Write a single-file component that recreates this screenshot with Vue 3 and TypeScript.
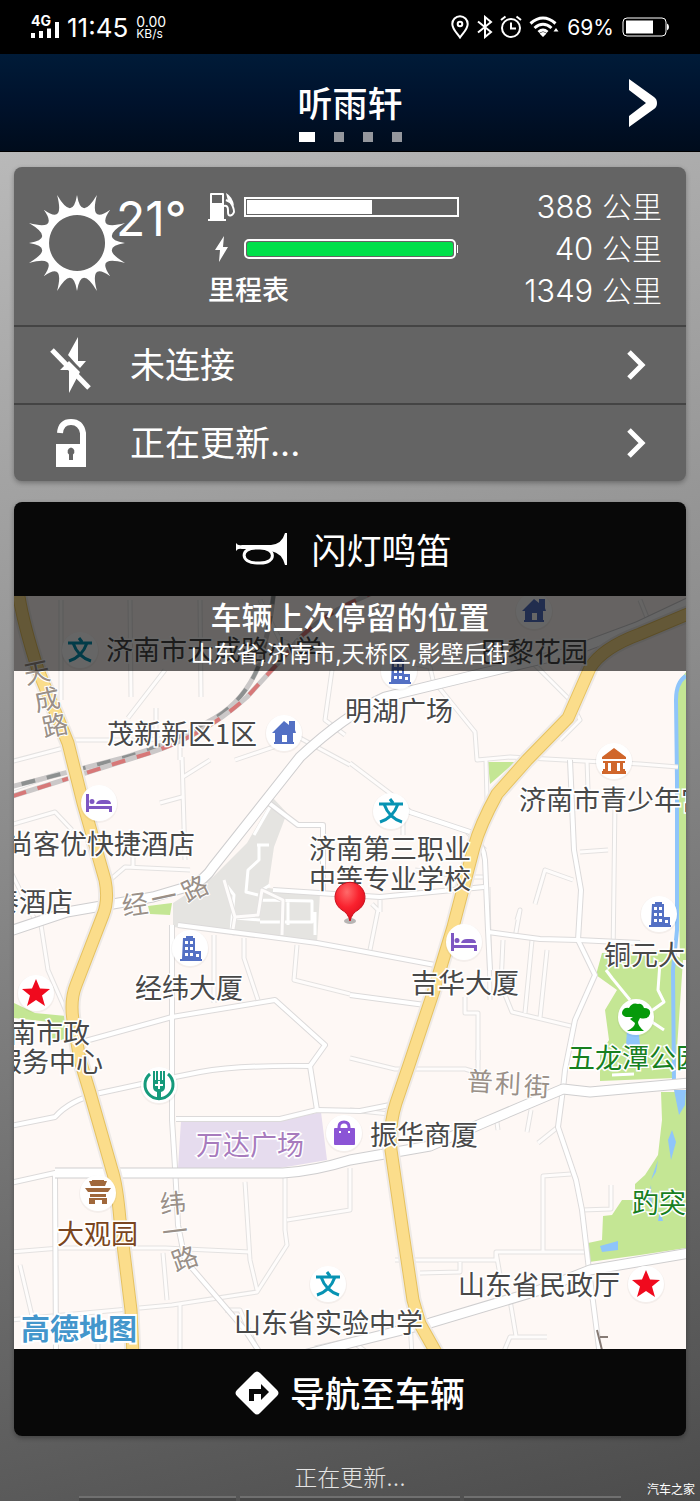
<script setup lang="ts">
interface Reading { value: string }
interface Label { text: string; x: number; y: number; tone?: string }
interface RoadChar { text: string; x: number; y: number; turn: number }
interface Pin { kind: string; x: number; y: number }

const fuelLevel = 60
const batteryLevel = 100
const readings: Reading[] = [{ value: '388' }, { value: '40' }, { value: '1349' }]

const pages = [0, 1, 2, 3]
const activePage = 0

function sunPath(): string {
  const reach = [48, 52, 47, 52]
  const point = (radius: number, step: number) => {
    const a = (step * Math.PI) / 16
    return `${(49 + radius * Math.sin(a)).toFixed(1)} ${(49 - radius * Math.cos(a)).toFixed(1)}`
  }
  let d = `M${point(48, 0)}`
  for (let i = 0; i < 16; i++) {
    d += `Q${point(22, i * 2 + 1)} ${point(reach[(i + 1) % 4], i * 2 + 2)}`
  }
  return d + 'ZM49 21a28 28 0 1 0 .1 0Z'
}
const sun = sunPath()

const whiteRoads = [
  'M690 602L637 627L567 653L467 677L385 697Q345 715 300 757L213 867Q205 880 190 886L153 897L67 912L10 931',
  'M55 1173H283Q315 1171 350 1160L430 1146L483 1123L563 1089L590 1092L690 1083',
  'M690 1253L590 1270L537 1291L430 1323L350 1343L300 1356',
]
const midRoads = [
  'M172 925V1120Q176 1180 178 1225L185 1260L245 1330L262 1356',
  'M10 1126L55 1117Q70 1100 100 1093L160 1080L200 1072Q240 1065 310 1066L325 1045L275 1000L172 1017L78 1043',
  'M176 1119L280 1119L317 1110L360 1111L390 1105',
  'M310 1066L317 1110',
  'M563 1089L565 1070L575 1020L595 975L578 940L581 890L574 850L570 760',
  'M563 1089L558 1127L576 1180L582 1210L589 1270L600 1356',
  'M10 1183L55 1173L56 1356',
  'M178 925L317 943L350 949L435 965',
  'M265 800L298 825H323V895',
  'M273 890L380 897L484 887',
  'M400 805L410 812L470 832Q484 845 485 860L488 930L490 970',
  'M488 932L540 939L578 940L640 943',
  'M350 995L425 1005',
]
const lanes = [
  'M61 600V700M130 600L131 697M200 600L201 697M165 670L128 718M70 740H140L180 738V760',
  'M10 762L75 745M156 708V735M260 600L280 640L330 660M332 670L325 720L345 735',
  'M395 660L430 667L433 680L475 732L477 760L510 757L565 760L640 764L678 767',
  'M182 757L185 860M183 777L210 760M160 803L182 797M10 825L55 812L72 830',
  'M110 880L125 867L190 870M133 855V868M10 870L35 920M41 925L48 970L72 1025',
  'M214 935V1003M244 938V958L258 1000M297 945L294 980L350 994',
  'M282 935L283 900L262 890L258 915L235 917L224 880M235 917L232 935',
  'M350 763L395 797M403 801V835M350 765L300 738L235 760M372 904L378 910L370 950M380 900V912',
  'M415 870L465 877H485M488 887L490 1000M485 850L467 832M465 997V1013H478V1060',
  'M517 920L520 910L515 938M503 940L501 985L512 1012L575 1027M532 940L525 1013M547 950L540 1018',
  'M535 904L545 870L573 880M580 852L608 850M587 760L588 790M615 800L613 960',
  'M350 1110L390 1114M350 1058L395 1069H465L475 1072M478 1050V1072M496 1115L498 1130M531 1110L527 1132M558 1127L538 1143',
  'M582 1210L611 1209V1185M543 1252V1176L571 1174M395 1260L496 1260V1252H589M420 1273L460 1272V1262M496 1252L500 1275',
  'M245 1182L250 1260L257 1290M285 1177V1230L287 1245L257 1292L172 1305L10 1320M287 1220L350 1210V1168',
  'M10 1252L60 1248H165L250 1252M163 1253L167 1300M20 1265L33 1320M225 1310H240L260 1356M180 1305V1356M98 1320V1356',
  'M510 1300L516 1336M502 1356L510 1337H547M410 1320L412 1356M350 1340L372 1356M315 1348L360 1338',
  'M10 790L60 773M640 600L650 625M520 650L570 700L580 720L560 740M486 760L487 800',
]
const yellowRoads = [
  'M18 590Q22 620 38 670L68 743L83 803L105 880Q109 900 103 915L76 985Q70 1000 73 1020L80 1060L90 1093L112 1170Q117 1185 120 1220L131 1310L133 1356',
  'M690 613L640 634Q602 648 590 668L568 718L527 760L497 794Q480 825 474 847L453 927L433 993L410 1062L396 1103Q389 1125 391 1150L403 1233L413 1300L420 1324L438 1356',
]

const labels: Label[] = [
  { text: '济南市天成路小学', x: 106, y: 650 },
  { text: '巴黎花园', x: 480, y: 652 },
  { text: '明湖广场', x: 345, y: 711 },
  { text: '茂新新区1区', x: 107, y: 734 },
  { text: '济南市青少年宫', x: 519, y: 800 },
  { text: '尚客优快捷酒店', x: 6, y: 844 },
  { text: '泰酒店', x: -8, y: 902 },
  { text: '济南第三职业', x: 309, y: 849 },
  { text: '中等专业学校', x: 309, y: 879 },
  { text: '经纬大厦', x: 135, y: 988 },
  { text: '吉华大厦', x: 411, y: 983 },
  { text: '铜元大', x: 604, y: 955 },
  { text: '南市政', x: 9, y: 1033 },
  { text: '服务中心', x: -5, y: 1062 },
  { text: '五龙潭公园', x: 568, y: 1058, tone: 'park' },
  { text: '振华商厦', x: 370, y: 1135 },
  { text: '万达广场', x: 196, y: 1145, tone: 'mall' },
  { text: '趵突', x: 632, y: 1203, tone: 'park' },
  { text: '大观园', x: 57, y: 1234, tone: 'sight' },
  { text: '山东省民政厅', x: 458, y: 1285 },
  { text: '山东省实验中学', x: 234, y: 1323 },
]
const roadChars: RoadChar[] = [
  { text: '天', x: 37, y: 673, turn: -12 },
  { text: '成', x: 47, y: 700, turn: -12 },
  { text: '路', x: 55, y: 726, turn: -12 },
  { text: '经', x: 135, y: 905, turn: -8 },
  { text: '一', x: 164, y: 898, turn: -12 },
  { text: '路', x: 195, y: 889, turn: -26 },
  { text: '普', x: 480, y: 1082, turn: 3 },
  { text: '利', x: 508, y: 1084, turn: 3 },
  { text: '街', x: 537, y: 1087, turn: 3 },
  { text: '纬', x: 173, y: 1204, turn: -5 },
  { text: '一', x: 175, y: 1232, turn: -7 },
  { text: '路', x: 185, y: 1259, turn: -20 },
]
const pins: Pin[] = [
  { kind: 'school', x: 80, y: 650 },
  { kind: 'home', x: 534, y: 611 },
  { kind: 'tower', x: 399, y: 671 },
  { kind: 'home', x: 284, y: 733 },
  { kind: 'museum', x: 614, y: 761 },
  { kind: 'bed', x: 99, y: 803 },
  { kind: 'school', x: 391, y: 811 },
  { kind: 'tower', x: 190, y: 948 },
  { kind: 'bed', x: 464, y: 942 },
  { kind: 'tower', x: 659, y: 914 },
  { kind: 'star', x: 36, y: 993 },
  { kind: 'tree', x: 636, y: 1017 },
  { kind: 'bank', x: 159, y: 1085 },
  { kind: 'bag', x: 344, y: 1133 },
  { kind: 'gate', x: 98, y: 1193 },
  { kind: 'school', x: 328, y: 1284 },
  { kind: 'star', x: 646, y: 1284 },
]
</script>

<template>
  <div class="app">
    <div class="status">
      <svg class="signal" viewBox="0 0 28 26" aria-label="4G">
        <text x="0" y="12">4G</text>
        <path d="M0 19h4v5h-4zM8 17h4v7h-4zM16 14.500h4v9.500h-4zM24 8h4v16h-4z" />
      </svg>
      <span class="clock">11:45</span>
      <span class="speed"><span>0.00</span><small>KB/s</small></span>
      <span class="spacer"></span>
      <svg class="icon-location" viewBox="0 0 18 24" aria-hidden="true">
        <path d="M9 1.200a7.700 7.700 0 0 0-7.700 7.700C1.300 14 6 18 9 22.500c3-4.500 7.700-8.500 7.700-13.600A7.700 7.700 0 0 0 9 1.200Z" />
        <circle cx="9" cy="9" r="2.300" />
      </svg>
      <svg class="icon-bluetooth" viewBox="0 0 16 24" aria-hidden="true">
        <path d="M1 6.500 14 17 8 22V2l6 5L1 17.500" />
      </svg>
      <svg class="icon-alarm" viewBox="0 0 22 24" aria-hidden="true">
        <circle cx="11" cy="13" r="9" /><path d="M11 7.500v6h5M1 5l4.500-3.500M21 5l-4.500-3.500" />
      </svg>
      <svg class="icon-wifi" viewBox="0 0 30 24" aria-hidden="true">
        <path d="M1.500 8.500Q14 -2.500 26.500 8.500M5.500 13Q14 5.500 22.500 13M9.500 17Q14 13 18.500 17" />
        <path class="solid" d="M14 22l-3.500-3.500Q14 15.500 17.500 18.500ZM27 13l2.500 3.500h-5z" />
      </svg>
      <span class="percent">69%</span>
      <svg class="icon-battery" viewBox="0 0 47 20" aria-hidden="true">
        <rect x="1" y="1" width="43" height="18" rx="4" /><path class="solid" d="M4 3.500h27v13H4zM45 6.500q2 .5 2 3.500t-2 3.500z" />
      </svg>
    </div>

    <header class="top">
      <div class="title">
        <h1>听雨轩</h1>
        <div class="dots"><i v-for="p in pages" :key="p" :class="{ on: p === activePage }"></i></div>
      </div>
      <button class="next" type="button" aria-label="下一页">
        <svg viewBox="0 0 30 50" aria-hidden="true"><path d="M1 1 26 19Q29 21 29 25T26 31L1 49V38L18 25 1 12Z" /></svg>
      </button>
    </header>

    <main>
      <section class="card info">
        <div class="summary">
          <div class="weather">
            <svg class="sun" viewBox="0 0 98 98" aria-hidden="true"><path :d="sun" fill-rule="evenodd" /></svg>
            <span class="temp">21°</span>
          </div>
          <div class="gauges">
            <svg class="pump" viewBox="0 0 28 28" aria-hidden="true">
              <path fill-rule="evenodd" d="M2 1q0-1 1-1h12q1 0 1 1v25h2v2H0v-2h2zM4 2v8h10V2z" />
              <path class="hose" d="M16 13q4-1 4 4v2q0 4 2.500 3.500T26 19q0-5-4-10L18 7" />
              <path d="M18 0q7 4 8 13l-6-5z" />
            </svg>
            <div class="bar fuel" role="img" aria-label="油量"><div :style="{ width: fuelLevel + '%' }"></div></div>
            <span class="reading">{{ readings[0].value }} <b>公里</b></span>
            <svg class="bolt" viewBox="0 0 28 28" aria-hidden="true"><path d="M16 1 7 15h5l-1 12 9-15h-5z" /></svg>
            <div class="bar charge" role="img" aria-label="电量"><div :style="{ width: batteryLevel + '%' }"></div></div>
            <span class="reading">{{ readings[1].value }} <b>公里</b></span>
            <span class="odometer">里程表</span>
            <span class="reading">{{ readings[2].value }} <b>公里</b></span>
          </div>
        </div>
        <button class="row" type="button">
          <svg class="row-icon" viewBox="0 0 42 60" aria-hidden="true">
            <path d="M28 2 18 20l8 9 4 4 6-7h-8zM10 35l9-9 11 11-11 21V35z" />
            <path class="slash" d="M2 15 39 53" />
          </svg>
          <span>未连接</span>
          <svg class="chevron" viewBox="0 0 20 30" aria-hidden="true"><path d="M3 2 16 15 3 28" /></svg>
        </button>
        <button class="row" type="button">
          <svg class="row-icon" viewBox="0 0 42 60" aria-hidden="true">
            <path class="shackle" d="M10 20Q11 9 21 9T33 20V36" />
            <path fill-rule="evenodd" d="M6 31h30v23H6zM21 34.500a4 4 0 0 0-2 7V47h4v-5.500a4 4 0 0 0-2-7z" />
          </svg>
          <span>正在更新...</span>
          <svg class="chevron" viewBox="0 0 20 30" aria-hidden="true"><path d="M3 2 16 15 3 28" /></svg>
        </button>
      </section>

      <section class="card locate">
        <button class="action horn" type="button">
          <svg class="horn-icon" viewBox="0 0 52 34" aria-hidden="true">
            <path d="M0 11q2 3 6 2h29Q46 12 49 1h2v32h-2Q46 21 35 19l-8-2H6q-4-1-6 2z" />
            <path class="tube" d="M28 16H20C4 16 4 31 21 31h3C41 31 40 16 24 16" />
          </svg>
          <span>闪灯鸣笛</span>
        </button>
        <div class="map">
          <svg class="map-art" viewBox="14 596 672 753" preserveAspectRatio="xMidYMid slice" aria-label="地图">
            <rect class="land" x="14" y="596" width="672" height="753" />
            <path class="block" d="M273 798L287 813L274 847L268 888L320 893L317 943L173 927V903L213 877L247 843Z" />
            <path class="plaza" d="M181 1121L280 1121L321 1112L327 1160L280 1168H178Z" />
            <g class="green">
              <path d="M686 672L678 682V850L680 960H686ZM488 762H515L490 784ZM148 906L172 903L170 915L150 914Z" />
              <path d="M602 953L596 975L617 990L605 1010L609 1040L600 1055V1081L675 1078L683 960L668 950Z" />
              <path d="M661 1092L662 1120L658 1155L645 1175L635 1184V1200H622L612 1215L603 1216L602 1240L588 1243L589 1262L640 1255L686 1248V1092Z" />
              <path d="M14 1003L35 1013L66 1016L64 1040L52 1040L50 1022L14 1018Z" />
            </g>
            <g class="paths">
              <path d="M606 970L612 978L630 1000M660 962L658 990L664 1002L650 1012M652 1022L664 1030M612 1075L634 1074" />
              <path d="M254 835L270 807M257 845H269M259 845V860L248 870L246 892L258 895M224 882L234 895L231 932M235 918L260 920M258 915L262 890L270 885M261 900L312 901V922H260M288 900V925M315 912V935" />
            </g>
            <g class="water">
              <path d="M686 676Q676 682 676 700L677 780V930L673 970L674 1085" />
              <path class="pond" d="M600 1246L618 1241V1250L602 1252ZM674 1090L679 1115L685 1105L686 1090ZM627 1030L638 1025L640 1045H626ZM672 1130L676 1142L671 1160L668 1140ZM658 1160L656 1172L651 1180ZM651 1185L652 1205L648 1198ZM660 1210L663 1221H658Z" />
            </g>
            <g class="lane-edge"><path v-for="d in lanes" :key="d" :d="d" /></g>
            <g class="lane"><path v-for="d in lanes" :key="d" :d="d" /></g>
            <g class="mid-edge"><path v-for="d in midRoads" :key="d" :d="d" /></g>
            <g class="mid"><path v-for="d in midRoads" :key="d" :d="d" /></g>
            <g class="wide-edge"><path v-for="d in whiteRoads" :key="d" :d="d" /></g>
            <g class="wide"><path v-for="d in whiteRoads" :key="d" :d="d" /></g>
            <g class="rail">
              <path class="rail-bed" d="M274 590Q270 630 259 665Q245 700 215 718Q170 745 123 758L10 787" />
              <path class="rail-grey" d="M274 590Q270 630 259 665Q245 700 215 718Q170 745 123 758L10 787" />
              <path class="rail-bed" d="M380 590Q315 615 290 650L247 697Q200 740 133 758L10 797" />
              <path class="rail-red" d="M380 590Q315 615 290 650L247 697Q200 740 133 758L10 797" />
            </g>
            <g class="trunk-side"><path v-for="d in yellowRoads" :key="d" :d="d" /></g>
            <g class="trunk-edge"><path v-for="d in yellowRoads" :key="d" :d="d" /></g>
            <g class="trunk"><path v-for="d in yellowRoads" :key="d" :d="d" /></g>
            <path class="underpass" d="M597 1330L602 1350M600 1337H608" />

            <g v-for="(pin, i) in pins" :key="i" :transform="`translate(${pin.x} ${pin.y})`">
              <circle class="pin-shade" cy="1" r="19" />
              <circle class="pin-disc" r="18" />
              <path v-if="pin.kind === 'school'" class="school" d="M-1-12 2-8M-12-7H12M-7-7Q-2 7 11 11M7-7Q2 7-11 11" />
              <path v-else-if="pin.kind === 'home'" class="blue" fill-rule="evenodd" d="M0-12 5-8V-12H11V-3L12 0H9V9H10V11H-10V9H-9V0H-12ZM-2 2V9H3V2Z" />
              <path v-else-if="pin.kind === 'tower'" class="blue" fill-rule="evenodd" d="M-7-10H-4V-12H3V-10H5V3H11V11H12V13H-10V11H-8ZM-5-7V-4H-2V-7ZM0-7V-4H3V-7ZM-5-1V2H-2V-1ZM0-1V2H3V-1ZM-5 5V8H-2V5ZM0 5V8H3V5ZM6 6V9H9V6Z" />
              <path v-else-if="pin.kind === 'museum'" class="orange" d="M0-13 12-4V-2H-12V-4ZM-11 0H11V2H9V8H11V10H12V13H-12V10H-11V8H-9V2H-11ZM-6 2V10H-3V2ZM3 2V10H6V2Z" fill-rule="evenodd" />
              <path v-else-if="pin.kind === 'bed'" class="violet" d="M-13-9H-10V3H13V9H10V6H-10V9H-13ZM-7-4A2.500 2.500 0 1 1-7 1 2.500 2.500 0 0 1-7-4ZM-3 1Q-2-3 3-3H7Q12-3 12 1Z" />
              <path v-else-if="pin.kind === 'star'" class="red" d="M0-14 4-4.500 14-4 6 2.500 9 13 0 7-9 13-6 2.500-14-4-4-4.500Z" />
              <path v-else-if="pin.kind === 'tree'" class="tree" d="M-3 0H-10Q-16-2-13-7-11-10-7-9-4-15 2-13 6-14 8-9 15-9 14-3 12 3 4 1L2 5Q2 9 8 14H-9Q-1 10-1 6L-6 2Z" />
              <g v-else-if="pin.kind === 'bank'" class="bank">
                <path d="M-9-11A14 14 0 1 0 9-11" /><path class="grain" d="M-6-14H-4V-5H-3V-14H-1V-5H1V-14H3V-5H4V-14H6V2Q6 6 2 7V14H-2V7Q-6 6-6 2Z" /><path class="cross" d="M-4 0H4M0-4V4" />
              </g>
              <g v-else-if="pin.kind === 'bag'" class="bag">
                <path d="M-5-4V-6Q-5-11 0-11T5-6V-4" /><rect x="-10" y="-5" width="21" height="17" rx="1" /><path class="dots" d="M-5-2H-3V0H-5ZM4-2H6V0H4Z" />
              </g>
              <path v-else class="brown" d="M-9-12H-6V-13H6V-12H9L7-7H-7ZM-13-5H13L10-1H-10ZM-8 1H8V4H-8ZM-9 5H9V11H4V7H-3V11H-9Z" />
            </g>

            <text v-for="l in labels" :key="l.text" class="place" :class="l.tone" :x="l.x" :y="l.y + 10">{{ l.text }}</text>
            <text v-for="(c, i) in roadChars" :key="'r' + i" class="road" :transform="`translate(${c.x} ${c.y}) rotate(${c.turn})`" y="9">{{ c.text }}</text>
            <text class="brand" x="21" y="1340">高德地图</text>

            <defs>
              <radialGradient id="marker" cx=".4" cy=".25" r=".8">
                <stop offset="0" stop-color="#ff6a6a" /><stop offset=".5" stop-color="#f9222e" /><stop offset="1" stop-color="#d90a1a" />
              </radialGradient>
            </defs>
            <ellipse cx="350" cy="921" rx="6" ry="3" fill="#999" opacity=".7" />
            <path d="M350 921Q348 913 342 910A15 15 0 1 1 358 910Q352 913 350 921Z" fill="url(#marker)" stroke="#c8101c" />
          </svg>
          <div class="caption">
            <strong>车辆上次停留的位置</strong>
            <span>山东省,济南市,天桥区,影壁后街</span>
          </div>
        </div>
        <button class="action navigate" type="button">
          <svg class="nav-icon" viewBox="0 0 44 44" aria-hidden="true">
            <path fill-rule="evenodd" d="M19 2q3-3 6 0l17 17q3 3 0 6L25 42q-3 3-6 0L2 25q-3-3 0-6zM14 30h5v-7h7v6l8-8-8-8v5H14z" />
          </svg>
          <span>导航至车辆</span>
        </button>
      </section>
    </main>

    <footer>
      <p>正在更新...</p>
      <div class="tabs"><i></i><i></i><i></i></div>
    </footer>
    <span class="credit">汽车之家</span>
  </div>
</template>

<style>
body { margin: 0; }
</style>

<style scoped>
.app {
  position: relative;
  overflow: hidden;
  color: #fff;
  font-family: "Inter", "Noto Sans CJK SC", sans-serif;
  background: linear-gradient(165deg, #bababa 8%, #8b8b8b 50%, #4c4c4c 100%);
}
button { margin: 0; padding: 0; border: 0; background: none; color: inherit; font: inherit; cursor: pointer; }
svg { display: block; fill: #fff; flex: none; }

.status { display: flex; align-items: center; height: 54px; padding: 0 31px; background: #000; }
.signal { width: 28px; height: 26px; margin-right: 8px; }
.signal text { font: 700 14px "Inter", sans-serif; }
.clock { font-size: 26px; line-height: 32px; padding-top: 2px; margin-right: 8px; }
.speed { display: flex; flex-direction: column; font-size: 14px; line-height: 13px; }
.speed small { font-size: 12px; line-height: 12px; }
.spacer { flex: 1; }
.icon-location, .icon-bluetooth, .icon-alarm, .icon-wifi, .icon-battery { fill: none; stroke: #fff; stroke-width: 2; }
.icon-location { width: 18px; height: 24px; margin-right: 8px; }
.icon-bluetooth { width: 16px; height: 24px; margin-right: 7px; }
.icon-alarm { width: 22px; height: 24px; margin-right: 7px; }
.icon-wifi { width: 30px; height: 24px; margin-right: 8px; stroke-width: 3; }
.icon-battery { width: 47px; height: 20px; stroke-width: 1; }
.solid { fill: #fff; stroke: none; }
.percent { font-size: 21px; margin-right: 8px; }

.top { display: grid; grid-template-columns: 100px 1fr 100px; height: 98px; box-sizing: border-box; border-bottom: 1px solid #000; background: linear-gradient(#001b38, #00122c 50%, #000c1c); }
.title { grid-column: 2; display: flex; flex-direction: column; align-items: center; padding-top: 29px; }
h1 { margin: 0; font-size: 35px; line-height: 42px; font-weight: 500; }
.dots { display: flex; gap: 19px; margin-top: 7px; }
.dots i { width: 10px; height: 10px; background: #94979d; }
.dots .on { width: 16px; background: #fff; }
.next { display: flex; align-items: center; padding-left: 28px; }
.next svg { width: 30px; height: 50px; }

main { padding: 15px 14px 0; }
.card { overflow: hidden; border-radius: 8px; box-shadow: 0 2px 5px rgba(0, 0, 0, .3); }
.info { background: #646464; margin-bottom: 21px; }
.summary { display: flex; padding: 19px 24px 13px 14px; }
.weather { display: flex; align-items: flex-start; width: 180px; flex: none; }
.sun { width: 98px; height: 98px; margin-top: 8px; }
.temp { font-size: 48px; line-height: 56px; font-weight: 400; margin: 5px 0 0 -10px; }
.gauges { flex: 1; display: grid; grid-template-columns: 36px 215px 1fr; grid-auto-rows: 42px; align-items: center; }
.pump, .bolt { width: 28px; height: 28px; }
.hose { fill: none; stroke: #fff; stroke-width: 2; }
.bar { box-sizing: border-box; height: 20px; border: 2px solid #fff; padding: 1px; }
.bar div { height: 100%; background: #fff; }
.charge { position: relative; margin-right: 3px; border-radius: 5px; }
.charge::after { content: ""; position: absolute; right: -4px; top: 4px; width: 1px; height: 8px; background: #fff; }
.charge div { border-radius: 3px; background: #00e04a; }
.reading { text-align: right; font-size: 31px; line-height: 42px; font-weight: 300; white-space: nowrap; }
.reading b { font-size: 30px; font-weight: 300; }
.odometer { grid-column: span 2; font-size: 27px; line-height: 42px; font-weight: 500; }
.row { display: flex; align-items: center; width: 100%; height: 78px; box-sizing: border-box; padding: 0 40px 0 36px; border-top: 2px solid #444; text-align: left; }
.row span { flex: 1; padding-bottom: 5px; font-size: 35px; font-weight: 400; }
.row-icon { width: 42px; height: 60px; margin-right: 38px; }
.slash { stroke: #fff; stroke-width: 5; }
.shackle { fill: none; stroke: #fff; stroke-width: 6; }
.chevron { width: 20px; height: 30px; fill: none; stroke: #fff; stroke-width: 5; }

.action { display: flex; align-items: center; justify-content: center; width: 100%; background: #080808; font-size: 35px; }
.action span { padding-bottom: 2px; }
.horn { height: 94px; gap: 23px; padding-right: 12px; }
.horn-icon { width: 52px; height: 34px; }
.tube { fill: none; stroke: #fff; stroke-width: 3; }
.navigate { height: 87px; gap: 11px; font-weight: 500; }
.nav-icon { width: 44px; height: 44px; }

.map { position: relative; }
.map-art { width: 100%; height: auto; }
.map-art path { stroke-linejoin: round; }
.caption { position: absolute; top: 0; left: 0; right: 0; display: flex; flex-direction: column; align-items: center; height: 75px; background: rgba(0, 0, 0, .6); }
.caption strong { font-size: 31px; line-height: 44px; font-weight: 500; }
.caption span { font-size: 23px; line-height: 28px; }

.land { fill: #fef8f5; }
.block { fill: #e5e4e1; }
.plaza { fill: #e6dcee; }
.green { fill: #c4e694; }
.paths path { fill: none; stroke: #fff; stroke-width: 3; }
.water path { fill: none; stroke: #8fc5fa; stroke-width: 4; }
.water .pond { fill: #8fc5fa; stroke: none; }
.lane-edge path, .lane path, .mid-edge path, .mid path, .wide-edge path, .wide path, .trunk-side path, .trunk-edge path, .trunk path, .rail path { fill: none; }
.lane-edge { stroke: #e4e2e1; stroke-width: 5; }
.lane { stroke: #fefcfb; stroke-width: 3; }
.mid-edge { stroke: #dcdada; stroke-width: 6; }
.mid { stroke: #fff; stroke-width: 4; }
.wide-edge { stroke: #cfcecf; stroke-width: 11; }
.wide { stroke: #fff; stroke-width: 9; }
.rail-bed { stroke: #cbc8c8; stroke-width: 5; }
.rail-bed + .rail-grey { stroke: #8d9090; stroke-width: 4; stroke-dasharray: 14 12; }
.rail-bed + .rail-red { stroke: #d77878; stroke-width: 4; stroke-dasharray: 14 12; }
.trunk-side { stroke: #eeeae7; stroke-width: 17; }
.trunk-edge { stroke: #e6c260; stroke-width: 13; }
.trunk { stroke: #fbdd8b; stroke-width: 11; }
.underpass { fill: none; stroke: #877b75; stroke-width: 2; }

.pin-shade { fill: #000; opacity: .04; }
.pin-disc { fill: #fff; }
.school { fill: none; stroke: #0793b3; stroke-width: 3; }
.blue { fill: #5370c4; }
.orange { fill: #d0662b; }
.violet { fill: #7e57c2; }
.red { fill: #f00a1e; }
.tree { fill: #069a0a; }
.brown { fill: #a0683b; }
.bank path { fill: none; stroke: #159a7b; stroke-width: 3; }
.bank .grain { fill: #159a7b; stroke: none; }
.bank .cross { stroke: #fff; stroke-width: 2; }
.bag rect { fill: #8b54d6; }
.bag path { fill: none; stroke: #8b54d6; stroke-width: 3; }
.bag .dots { fill: #fff; stroke: none; }

.place { font-family: "Noto Sans CJK SC", sans-serif; font-size: 27px; fill: #484848; stroke: #fff; stroke-width: 3px; paint-order: stroke; }
.park { fill: #18801f; }
.mall { fill: #a77bbd; }
.sight { fill: #7a4520; }
.road { font-family: "Noto Sans CJK SC", sans-serif; font-size: 26px; font-weight: 400; text-anchor: middle; fill: #9a9088; stroke: #fff; stroke-width: 2px; paint-order: stroke; }
.brand { font-family: "Noto Sans CJK SC", sans-serif; font-size: 29px; font-weight: 700; fill: #4396cc; stroke: #fff; stroke-width: 4px; paint-order: stroke; }

footer { padding-top: 24px; text-align: center; }
footer p { margin: 0; font-size: 23px; line-height: 36px; font-weight: 300; color: #e4e4e4; }
.tabs { display: grid; grid-template-columns: 5fr 7fr 5fr; gap: 4px; padding: 0 79px; }
.tabs i { height: 3px; border-top: 2px solid #707070; background: #484848; }
.credit { position: absolute; right: 5px; bottom: 2px; font-size: 12px; line-height: 18px; }
</style>
